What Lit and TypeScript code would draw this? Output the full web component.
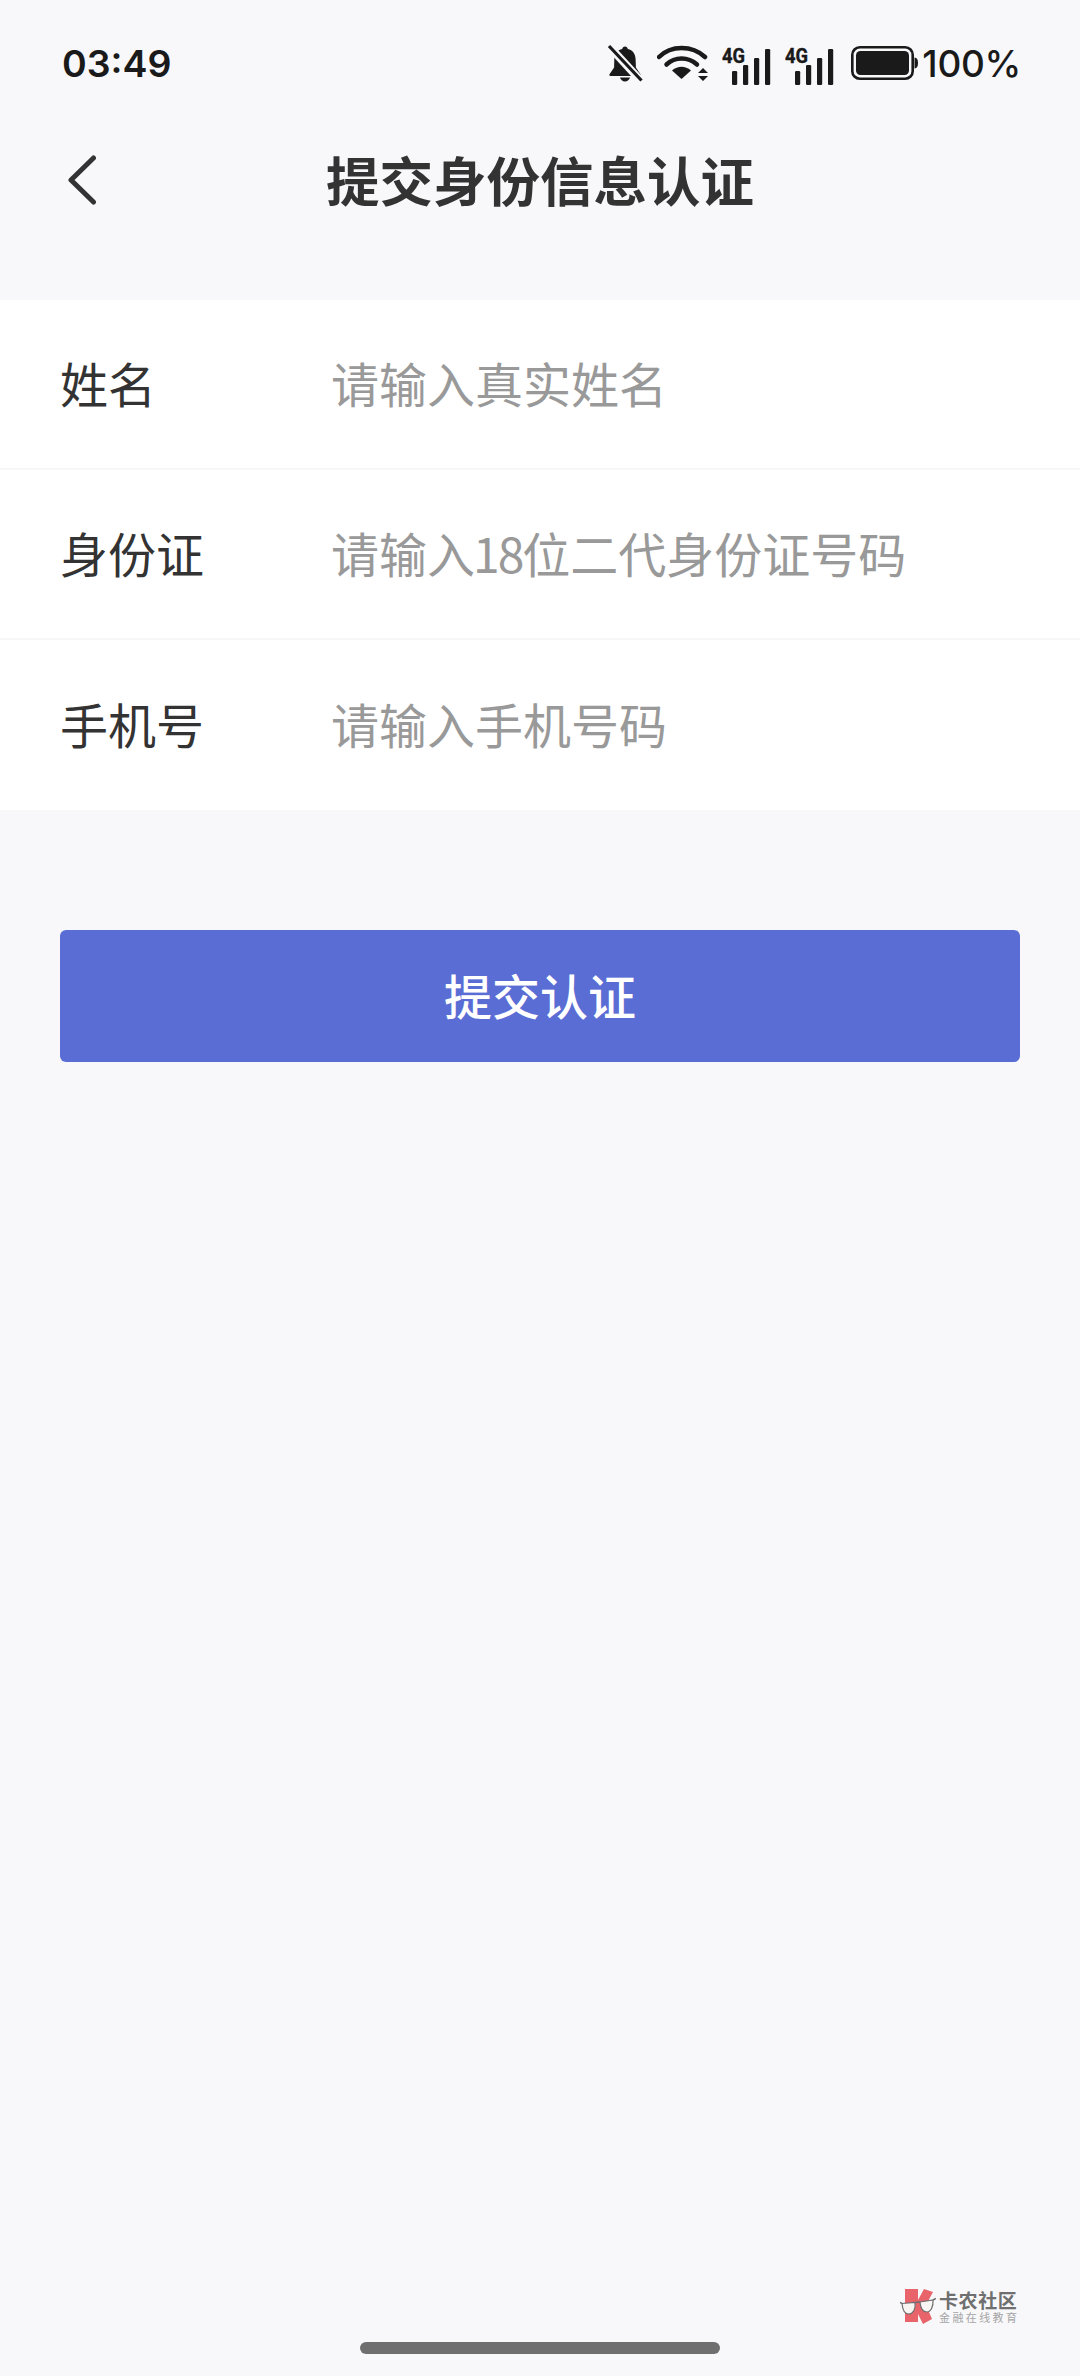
import { LitElement, html, css } from "lit";
import { customElement } from "lit/decorators.js";

const signal = () => html`<svg class="sig" viewBox="0 -6 50 44" width="50" height="44">
  <text x="0" y="16" class="g4" textLength="23" lengthAdjust="spacingAndGlyphs">4G</text>
  <rect x="10" y="24" width="5.2" height="14" rx="1.2"/>
  <rect x="21" y="18" width="5.2" height="20" rx="1.2"/>
  <rect x="32" y="11" width="5.2" height="27" rx="1.2"/>
  <rect x="43" y="2" width="5.2" height="36" rx="1.2"/>
</svg>`;

@customElement("app-root")
export class AppRoot extends LitElement {
  static styles = css`
    :host {
      display: block;
      position: relative;
      width: 1080px;
      height: 2376px;
      overflow: hidden;
      background: #f8f8fb;
      color: #333;
      font-family: "Noto Sans CJK SC", "Noto Sans", sans-serif;
    }
    .status {
      height: 126px;
      display: flex;
      align-items: center;
      justify-content: space-between;
      padding: 0 59px 0 62px;
      color: #1a1a1a;
      font-family: Inter, Roboto, sans-serif;
    }
    .time { font-size: 37.500px; font-weight: 600; }
    .icons { display: flex; align-items: center; }
    .icons svg { display: block; fill: #1a1a1a; }
    .bell { margin-right: 14px; }
    .wifi { margin-right: 13px; }
    .sig + .sig { margin-left: 13px; }
    .battery { margin-left: 16px; margin-right: 4px; }
    .g4 { font: 700 20px "Roboto", sans-serif; fill: #1a1a1a; stroke: #1a1a1a; stroke-width: 0.4; }
    .pct { font-size: 37px; font-weight: 500; letter-spacing: -0.3px; line-height: 1; }
    .header {
      height: 112px;
      margin-bottom: 62px;
      display: flex;
      align-items: center;
      justify-content: center;
      position: relative;
    }
    .back { position: absolute; left: 68px; top: 29px; fill: none; stroke: #333; stroke-width: 5; stroke-linecap: round; stroke-linejoin: round; }
    .title { font-size: 53.500px; font-weight: 700; color: #333; line-height: 1; padding-bottom: 6px; }
    .form { background: #fff; }
    .row {
      height: 170px;
      box-sizing: border-box;
      display: flex;
      align-items: center;
      padding: 0 0 5px 60px;
      border-bottom: 2px solid #f7f7f8;
      font-size: 48px;
      line-height: 1;
    }
    .row:last-child { border-bottom: none; }
    .label { width: 271px; flex: none; color: #333; }
    .ph { color: #999; }
    .num { letter-spacing: -2px; margin-left: -2px; }
    .btn {
      margin: 120px 60px 0;
      height: 132px;
      box-sizing: border-box;
      padding-bottom: 4px;
      border-radius: 6px;
      background: #5a6dd4;
      color: #fff;
      font-size: 48px;
      font-weight: 500;
      display: flex;
      align-items: center;
      justify-content: center;
      line-height: 1;
    }
    .mark {
      position: absolute;
      left: 900px;
      top: 2288px;
      display: flex;
      align-items: center;
      gap: 3px;
    }
    .mark-text { display: flex; flex-direction: column; line-height: 1; }
    .mark-a { font-size: 19px; font-weight: 700; color: #6f6f6f; letter-spacing: 0.6px; }
    .mark-b { font-size: 11px; color: #a5a5a5; letter-spacing: 2.4px; margin-top: 3px; }
    .home {
      position: absolute;
      left: 360px;
      top: 2342px;
      width: 360px;
      height: 12px;
      border-radius: 6px;
      background: #6f6f6f;
    }
  `;

  render() {
    const rows = [
      ["姓名", html`请输入真实姓名`],
      ["身份证", html`请输入<span class="num">18</span>位二代身份证号码`],
      ["手机号", html`请输入手机号码`],
    ];
    return html`
      <div class="status">
        <div class="time">03:49</div>
        <div class="icons">
          <svg class="bell" viewBox="0 0 36 38" width="36" height="38">
            <path d="M18 2.5c1.5 0 2.6 1 2.8 2.5 5 1.2 7.6 5 7.8 10l.3 8.5 4.6 6.8c.4.8 0 1.7-1 1.7H3.5c-1 0-1.4-.9-1-1.7l4.6-6.8.2-8.5c.2-5 2.900-8.800 7.900-10C15.400 3.500 16.500 2.500 18 2.500z"/>
            <path d="M13 33.500h10c-.5 2.300-2.600 4-5 4s-4.500-1.700-5-4z"/>
            <path d="M1 1 L34 37" stroke="#f8f8fb" stroke-width="8" fill="none"/>
            <path d="M2 2 L34.500 36.500" stroke="#1a1a1a" stroke-width="3.200" fill="none"/>
          </svg>
          <svg class="wifi" viewBox="0 0 52 38" width="52" height="38">
            <path d="M2 13 C14 1 35 1 48 13" fill="none" stroke="#1a1a1a" stroke-width="4.500" stroke-linecap="round"/>
            <path d="M9.500 20.500 C18 12.500 31 12.500 40 20.500" fill="none" stroke="#1a1a1a" stroke-width="4.500" stroke-linecap="round"/>
            <path d="M15 26.500 L24.500 35 L34 26.500 C28 21.500 21 21.500 15 26.500z"/>
            <path d="M41 29 L46 24 L51 29z M41 32 L51 32 L46 37z"/>
          </svg>
          ${signal()}${signal()}
          <svg class="battery" viewBox="0 0 67 34" width="67" height="34">
            <rect x="1.300" y="1.300" width="60.400" height="31.400" rx="7.500" fill="none" stroke="#1a1a1a" stroke-width="2.600"/>
            <rect x="5" y="5" width="53" height="24" rx="4.500"/>
            <path d="M63.500 11.500 c2.500 .3 3.500 2 3.500 5.500 s-1 5.200-3.500 5.500z"/>
          </svg>
          <div class="pct">100%</div>
        </div>
      </div>
      <div class="header">
        <svg class="back" viewBox="0 0 32 52" width="32" height="52"><path d="M25.500 3 L3 25 L25.500 47"/></svg>
        <div class="title">提交身份信息认证</div>
      </div>
      <div class="form">
        ${rows.map(([l, p]) => html`<div class="row"><div class="label">${l}</div><div class="ph">${p}</div></div>`)}
      </div>
      <div class="btn">提交认证</div>
      <div class="mark">
        <svg viewBox="0 0 36 36" width="36" height="36">
          <path d="M5 1 H18 V12 L24 1 L33 4 L26 17 L32 31 L23 36 L18 26 V34 H5z" fill="#e9646a"/>
          <path d="M2 15.500 L15 14.500 C16 21 13 26 8.500 26 C4.500 26 2.500 21 2 15.500z" fill="#f8f5f3" stroke="#6f6f6f" stroke-width="1.200"/>
          <path d="M20 14 L33 12 C33.500 18 31 24 27 24 C23 24 20.500 20 20 14z" fill="#f8f5f3" stroke="#6f6f6f" stroke-width="1.200"/>
          <path d="M15 14.500 L20 14 M33 12 L36 10.500 M2 15.500 L0 14.500" stroke="#6f6f6f" stroke-width="1.400" fill="none"/>
        </svg>
        <div class="mark-text">
          <div class="mark-a">卡农社区</div>
          <div class="mark-b">金融在线教育</div>
        </div>
      </div>
      <div class="home"></div>
    `;
  }
}
